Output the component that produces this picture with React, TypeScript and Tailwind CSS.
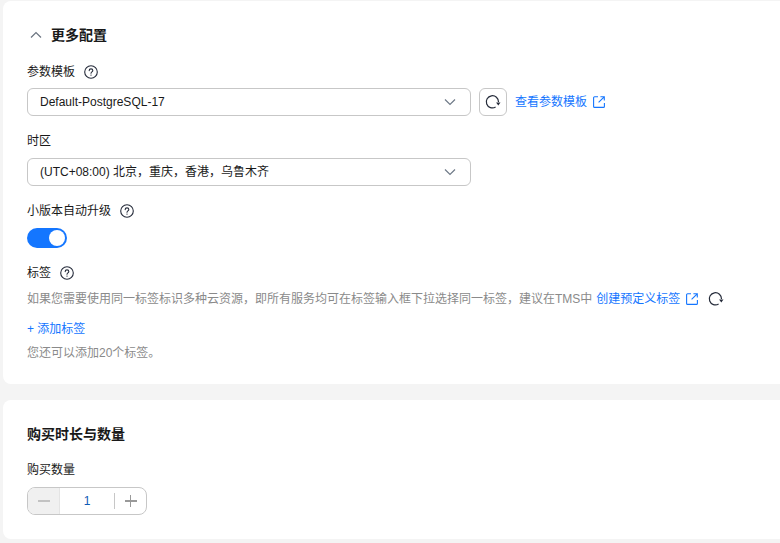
import React from 'react';

function HelpIcon() {
  return (
    <svg width="14" height="14" viewBox="0 0 14 14" fill="none" stroke="#252b3a" strokeWidth="1.1">
      <circle cx="7" cy="7" r="6.3" />
      <path d="M5.2 5.6c0-1 .8-1.7 1.8-1.7s1.8.7 1.8 1.6c0 1.3-1.8 1.4-1.8 2.7" strokeLinecap="round" />
      <circle cx="7" cy="10.1" r=".7" fill="#252b3a" stroke="none" />
    </svg>
  );
}

function ExternalIcon() {
  return (
    <svg width="12" height="12" viewBox="0 0 12 12" fill="none" stroke="#1476ff" strokeWidth="1.1">
      <path d="M5 .8H1.6a1 1 0 0 0-1 1v8.6a1 1 0 0 0 1 1h8.8a1 1 0 0 0 1-1V7" />
      <path d="M7.4.7h3.9v3.9M11.2.8 5.6 6.4" />
    </svg>
  );
}

function RefreshIcon() {
  return (
    <svg width="16" height="16" viewBox="0 0 16 16" fill="none">
      <path d="M10.6 13A6.1 6.1 0 1 1 13.5 8" stroke="#252b3a" strokeWidth="1.2" />
      <path d="M11.1 8.6h4.4l-2.2 2.8z" fill="#252b3a" />
    </svg>
  );
}

function Chevron() {
  return (
    <svg width="12" height="8" viewBox="0 0 12 8" fill="none" stroke="#6f7a88" strokeWidth="1.2">
      <path d="M1 1.5 6 6.5l5-5" />
    </svg>
  );
}

function SelectBox({ text }: { text: string }) {
  return (
    <div className="flex h-7 w-[444px] items-center justify-between rounded-md border border-[#c7c7c7] bg-white pl-3 pr-[14px]">
      <span className="text-xs text-[#191919]">{text}</span>
      <Chevron />
    </div>
  );
}

export default function App() {
  return (
    <div
      className="h-[543px] w-[780px] overflow-hidden bg-[#f4f4f4] pl-[3px] pt-px text-xs text-[#191919]"
      style={{ fontFamily: '"Liberation Sans", "Noto Sans CJK SC", sans-serif' }}
    >
      <section className="h-[383px] rounded-l-lg bg-white pl-6 pt-[26px]">
        <div className="flex h-4 items-center">
          <svg width="12" height="8" viewBox="0 0 12 8" fill="none" stroke="#6b7480" strokeWidth="1.2" className="ml-[3px]">
            <path d="M1 6.5 6 1.5l5 5" />
          </svg>
          <h2 className="ml-[9px] text-sm font-bold leading-4">更多配置</h2>
        </div>

        <div className="mt-[20px] flex h-[18px] items-center gap-[9px]">
          <span>参数模板</span>
          <HelpIcon />
        </div>
        <div className="mt-[7px] flex items-center">
          <SelectBox text="Default-PostgreSQL-17" />
          <button className="ml-2 flex size-7 items-center justify-center rounded-md border border-[#c7c7c7]">
            <RefreshIcon />
          </button>
          <a className="ml-2 text-[#1476ff]">查看参数模板</a>
          <span className="ml-[6px] flex"><ExternalIcon /></span>
        </div>

        <div className="mt-4 h-[18px] leading-[18px]">时区</div>
        <div className="mt-2">
          <SelectBox text="(UTC+08:00) 北京，重庆，香港，乌鲁木齐" />
        </div>

        <div className="mt-4 flex h-[18px] items-center gap-[9px]">
          <span>小版本自动升级</span>
          <HelpIcon />
        </div>
        <div className="mt-2 flex h-5 w-10 items-center justify-end rounded-full bg-[#1476ff] pr-0.5">
          <div className="size-4 rounded-full bg-white" />
        </div>

        <div className="mt-4 flex h-[18px] items-center gap-[9px]">
          <span>标签</span>
          <HelpIcon />
        </div>
        <div className="mt-2 flex h-[18px] items-center whitespace-nowrap text-[#8a8a8a]">
          <span>如果您需要使用同一标签标识多种云资源，即所有服务均可在标签输入框下拉选择同一标签，建议在TMS中</span>
          <a className="ml-1 text-[#1476ff]">创建预定义标签</a>
          <span className="ml-[6px] flex"><ExternalIcon /></span>
          <span className="ml-[10px] flex"><RefreshIcon /></span>
        </div>
        <div className="mt-3 h-[18px] leading-[18px] text-[#1476ff]">+ 添加标签</div>
        <div className="mt-[6px] h-[18px] leading-[18px] text-[#8a8a8a]">您还可以添加20个标签。</div>
      </section>

      <section className="mt-4 h-[139px] rounded-l-lg bg-white pl-6 pt-[26px]">
        <h2 className="text-sm font-bold leading-4">购买时长与数量</h2>
        <div className="mt-[19px] h-[18px] leading-[18px]">购买数量</div>
        <div className="mt-2 flex h-7 w-[120px] items-center overflow-hidden rounded-lg border border-[#c7c7c7]">
          <div className="flex h-full w-8 items-center justify-center border-r border-[#e4e4e4] bg-[#f0f0f0]">
            <div className="h-[1.5px] w-3 bg-[#c2c2c2]" />
          </div>
          <div className="flex-1 text-center text-[#0f5bb5]">1</div>
          <div className="h-4 w-px bg-[#c7c7c7]" />
          <div className="relative flex h-full w-[31px] items-center justify-center">
            <div className="h-[1.5px] w-3 bg-[#999999]" />
            <div className="absolute h-3 w-[1.5px] bg-[#999999]" />
          </div>
        </div>
      </section>
    </div>
  );
}
